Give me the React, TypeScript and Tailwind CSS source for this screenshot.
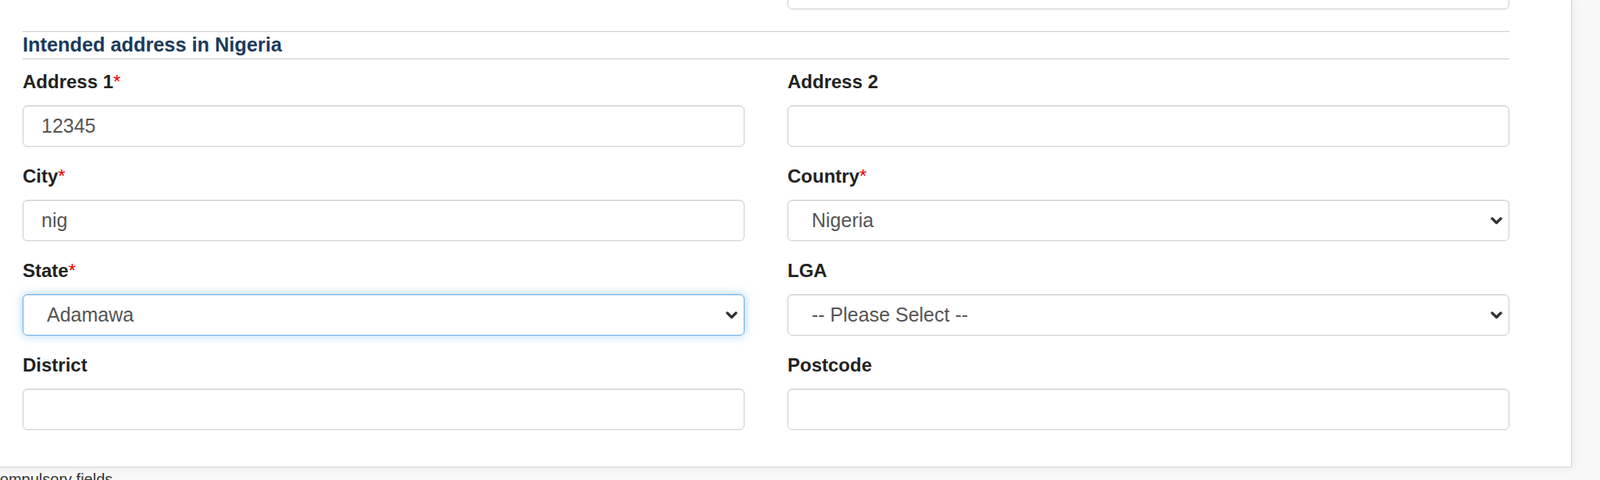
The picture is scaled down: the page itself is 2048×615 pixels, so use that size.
const font = { fontFamily: '"Liberation Sans", Arial, sans-serif' };

type Field = {
  label: string;
  required?: boolean;
  value?: string;
  select?: boolean;
  focused?: boolean;
};

const fields: Field[] = [
  { label: "Address 1", required: true, value: "12345" },
  { label: "Address 2" },
  { label: "City", required: true, value: "nig" },
  { label: "Country", required: true, value: "Nigeria", select: true },
  { label: "State", required: true, value: "Adamawa", select: true, focused: true },
  { label: "LGA", value: "-- Please Select --", select: true },
  { label: "District" },
  { label: "Postcode" },
];

function Chevron() {
  return (
    <svg width="15" height="10" viewBox="0 0 15 10" className="pointer-events-none absolute right-[9px] top-1/2 -translate-y-1/2">
      <polyline points="2,2 7.5,7.5 13,2" fill="none" stroke="#333" strokeWidth="3.4" strokeLinecap="round" strokeLinejoin="round" />
    </svg>
  );
}

function FormField({ f, last }: { f: Field; last: boolean }) {
  const box =
    "block w-full h-[53px] rounded-[6px] border bg-white text-[25px] text-[#555] outline-none " +
    (f.focused
      ? "border-[#66afe9] shadow-[inset_0_1px_1px_rgba(0,0,0,0.075),0_0_12px_rgba(102,175,233,0.6)]"
      : "border-[#cccccc] shadow-[inset_0_1px_1px_rgba(0,0,0,0.075)]");

  return (
    <div className={last ? "" : "mb-[23px]"}>
      <label className="mb-[15px] block h-[30px] text-[24px] font-bold leading-[30px] text-[#222]">
        {f.label}
        {f.required && <span className="font-normal text-[#e00]">*</span>}
      </label>
      {f.select ? (
        <div className="relative">
          <select
            defaultValue={f.value}
            className={box + " appearance-none pl-[30px] pr-[40px]"}
            style={font}
          >
            <option>{f.value}</option>
          </select>
          <Chevron />
        </div>
      ) : (
        <input defaultValue={f.value} className={box + " px-[23px]"} style={font} />
      )}
    </div>
  );
}

export default function App() {
  return (
    <div className="relative h-[615px] w-full overflow-hidden bg-[#f8f8f8]" style={font}>
      <div className="ml-[-50px] w-[2062px] border-r border-b border-[#d2d2d2] bg-white px-[79px] pb-[47px] shadow-[0_0_12px_rgba(0,0,0,0.07)]">
        {/* tail of the previous section */}
        <div className="grid grid-cols-2 gap-x-[55px]">
          <div />
          <div className="-mt-[41px] h-[53px] rounded-[6px] border border-[#cccccc] shadow-[inset_0_1px_1px_rgba(0,0,0,0.075)]" />
        </div>

        <div className="mt-[28px] border-t border-b border-[#c9c9c9] pt-[2px] pb-[4px]">
          <h3 className="text-[25.3px] font-bold leading-[28px] text-[#1b3a5c]">Intended address in Nigeria</h3>
        </div>

        <div className="mt-[14px] grid grid-cols-2 gap-x-[55px]">
          {fields.map((f, i) => (
            <FormField key={f.label} f={f} last={i >= fields.length - 2} />
          ))}
        </div>
      </div>
      <p className="mt-[4px] ml-[-28px] text-[20px] leading-[23px] text-[#333]">* Compulsory fields</p>
    </div>
  );
}
